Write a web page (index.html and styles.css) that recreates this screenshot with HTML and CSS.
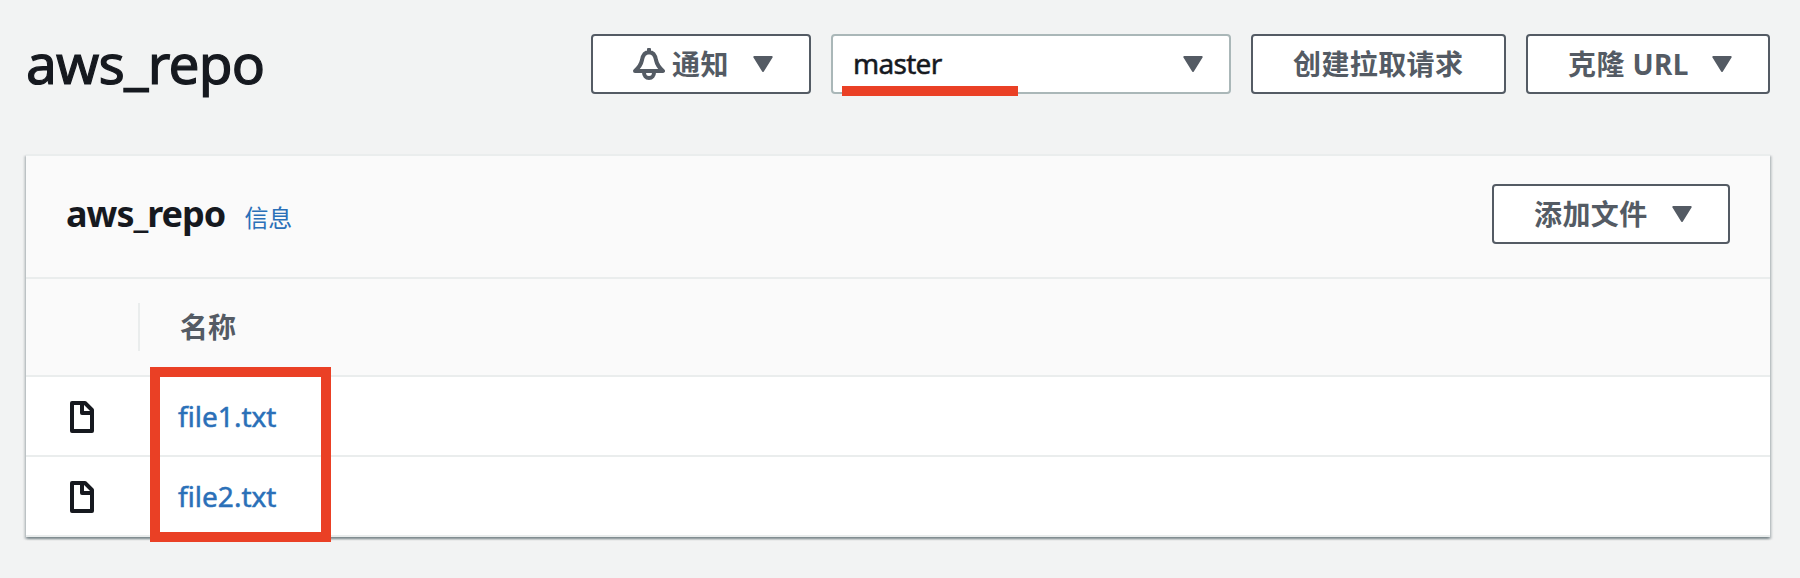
FILE: index.html
```html
<!DOCTYPE html>
<html lang="zh-CN">
<head>
<meta charset="utf-8">
<title>aws_repo</title>
<link rel="stylesheet" href="styles.css">
</head>
<body>
<svg class="defs" aria-hidden="true">
  <symbol id="caret" viewBox="0 0 20 16"><path d="M1.300 1h17.400L10 15z" fill="currentColor" stroke="currentColor" stroke-width="2" stroke-linejoin="round"/></symbol>
  <symbol id="file" viewBox="0 0 24 32"><path d="M2 2h13l7 7v21H2zM12 2v10h10" fill="none" stroke="currentColor" stroke-width="4" stroke-linejoin="round"/></symbol>
  <symbol id="bell" viewBox="0 0 32 32"><path d="M16 1.500v3M2 23C6 19.500 8 17 9 12C9.800 7 12 4.200 16 4.200S22.200 7 23 12C24 17 26 19.500 30 23zM11 24.500c0 3.300 2 5.500 5 5.500s5-2.200 5-5.500" fill="none" stroke="currentColor" stroke-width="4" stroke-linejoin="round" stroke-linecap="round"/></symbol>
</svg>
<main class="page">
  <header class="toolbar">
    <h1 class="title">aws_repo</h1>
    <div class="actions">
      <button class="button notify"><svg class="bell"><use href="#bell"/></svg><span class="label">通知</span><svg class="caret"><use href="#caret"/></svg></button>
      <div class="select"><span class="branch">master</span><svg class="caret"><use href="#caret"/></svg><i class="underline"></i></div>
      <button class="button pull"><span class="label">创建拉取请求</span></button>
      <button class="button clone"><span class="label">克隆 URL</span><svg class="caret"><use href="#caret"/></svg></button>
    </div>
  </header>
  <section class="panel">
    <div class="panel-head">
      <h2 class="repo">aws_repo</h2>
      <a class="info">信息</a>
      <button class="button add"><span class="label">添加文件</span><svg class="caret"><use href="#caret"/></svg></button>
    </div>
    <div class="columns"><span class="column">名称</span></div>
    <div class="row"><svg class="file"><use href="#file"/></svg><a class="link">file1.txt</a></div>
    <div class="row"><svg class="file"><use href="#file"/></svg><a class="link">file2.txt</a></div>
    <i class="highlight"></i>
  </section>
</main>
</body>
</html>
```
FILE: styles.css
```css
* { box-sizing: border-box; }
body {
  margin: 0;
  background: #f2f3f3;
  color: #16191f;
  font-family: "Noto Sans", "Noto Sans CJK SC", sans-serif;
  font-size: 28px;
}
svg { display: block; flex: none; }
.defs { position: absolute; width: 0; height: 0; }
.page { padding: 34px 30px 0 26px; height: 578px; }
.toolbar { display: flex; justify-content: space-between; height: 120px; }
.title { margin: -1px 0 0; font-size: 55px; font-weight: 400; line-height: 60px; letter-spacing: -0.8px; -webkit-text-stroke: 1.2px currentColor; }
.actions { display: flex; gap: 20px; height: 60px; }
.button {
  display: flex;
  align-items: center;
  height: 60px;
  padding: 0 36px 0 40px;
  border: 2px solid #545b64;
  border-radius: 4px;
  background: #fff;
  color: #545b64;
  font: 700 28px/56px "Noto Sans", "Noto Sans CJK SC", sans-serif;
  letter-spacing: 0.4px;
  white-space: nowrap;
}
.label { flex: 1; text-align: left; }
.caret { width: 20px; height: 16px; color: #545b64; }
.notify { width: 220px; }
.bell { width: 32px; height: 32px; margin-right: 7px; }
.pull { width: 255px; }
.clone { width: 244px; }
.select {
  position: relative;
  display: flex;
  align-items: center;
  justify-content: space-between;
  width: 400px;
  padding: 0 26px 0 20px;
  border: 2px solid #aab7b8;
  border-radius: 4px;
  background: #fff;
}
.branch { margin-top: -2px; letter-spacing: -0.7px; -webkit-text-stroke: 0.5px currentColor; }
.underline { position: absolute; left: 9px; top: 50px; width: 176px; height: 10px; background: #ea4025; }
.panel {
  position: relative;
  width: 1744px;
  background: #fff;
  border-top: 2px solid #eaeded;
  box-shadow: 0 2px 2px rgba(0, 28, 36, .3), 2px 2px 2px rgba(0, 28, 36, .15), -2px 2px 2px rgba(0, 28, 36, .15);
}
.panel-head { display: flex; align-items: center; height: 123px; padding: 0 40px; border-bottom: 2px solid #eaeded; background: #fafafa; }
.repo { margin: -5px 0 0; font-size: 36px; line-height: 48px; letter-spacing: -1px; }
.info { margin: -1px 0 0 19px; color: #2a70b8; font-size: 24px; }
.add { width: 238px; margin: -5px 0 0 auto; }
.columns { display: flex; align-items: center; height: 98px; padding-left: 112px; border-bottom: 2px solid #eaeded; background: #fafafa; }
.column { height: 48px; padding-left: 40px; border-left: 2px solid #eaeded; color: #545b64; font-weight: 700; line-height: 48px; }
.row { display: flex; align-items: center; height: 80px; padding-left: 44px; border-bottom: 2px solid #eaeded; }
.file { width: 24px; height: 32px; margin-top: 2px; }
.link { margin-left: 84px; color: #2a70b8; -webkit-text-stroke: 0.5px currentColor; }
.highlight { position: absolute; left: 124px; top: 211px; width: 181px; height: 175px; border: 10px solid #ea4025; }
```
